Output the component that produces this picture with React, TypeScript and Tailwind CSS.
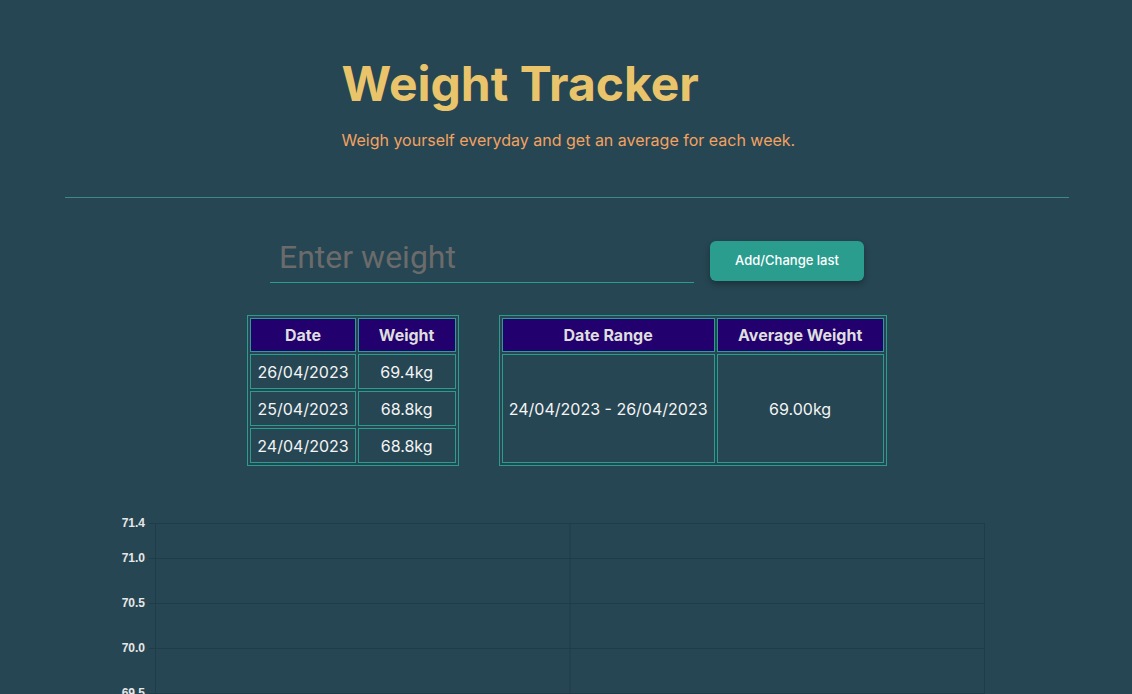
const days = [
  { date: "26/04/2023", weight: "69.4kg" },
  { date: "25/04/2023", weight: "68.8kg" },
  { date: "24/04/2023", weight: "68.8kg" },
];

const ticks = [
  { label: "71.4", y: 0 },
  { label: "71.0", y: 35 },
  { label: "70.5", y: 80 },
  { label: "70.0", y: 125 },
  { label: "69.5", y: 170 },
  { label: "69.0", y: 215 },
  { label: "68.5", y: 260 },
];

function Chart() {
  const left = 90;
  const right = 919;
  const mid = (left + right) / 2;
  return (
    <svg width="1004" height="300" className="block overflow-visible">
      {ticks.map((t) => (
        <g key={t.label}>
          <line x1={left - 6} x2={right} y1={t.y + 0.5} y2={t.y + 0.5} stroke="#1f3d49" strokeWidth="1" />
          <text
            x={left - 10}
            y={t.y + 4}
            textAnchor="end"
            fontFamily="Liberation Sans, Arial, sans-serif"
            fontWeight="bold"
            fontSize="12"
            fill="#e6e6e6"
          >
            {t.label}
          </text>
        </g>
      ))}
      {[left, mid, right].map((x) => (
        <line key={x} x1={x + 0.5} x2={x + 0.5} y1={0} y2={300} stroke="#1f3d49" strokeWidth="1" />
      ))}
    </svg>
  );
}

export default function App() {
  return (
    <div className="min-h-[694px] bg-[#264653] pb-10 pl-[2px] font-['Inter',sans-serif]">
      <header className="flex justify-center pt-[60px]">
        <div className="w-[451px] text-left">
          <h1 className="whitespace-nowrap text-[48px] font-bold leading-none text-[#e9c46a]">Weight Tracker</h1>
          <p className="mt-[20px] whitespace-nowrap text-base text-[#f4a261]">
            Weigh yourself everyday and get an average for each week.
          </p>
        </div>
      </header>

      <hr className="mx-auto mt-[45px] w-[1004px] border-0 border-t border-[#3f8884]" />

      <div className="mt-[40px] flex items-center justify-center gap-4">
        <input
          type="text"
          placeholder="Enter weight"
          className="h-[45px] w-[424px] border-0 border-b border-[#2a9d8f] bg-transparent px-[9px] pb-[6px] font-['Roboto',sans-serif] text-[32px] text-white outline-none placeholder:text-[#6b6b6b]"
        />
        <button
          type="button"
          className="h-10 w-[154px] rounded-md bg-[#2a9d8f] text-[13px] font-medium text-white shadow-[0_3px_6px_rgba(0,0,0,0.3)]"
        >
          Add/Change last
        </button>
      </div>

      <div className="mt-[32px] flex items-stretch justify-center gap-10">
        <table className="border-separate border-spacing-[2px] border border-[#2a9d8f] text-center text-base text-[#f4f4f4]">
          <thead>
            <tr>
              <th className="h-[34px] w-[105px] border border-[#2a9d8f] bg-[#22006e] font-bold text-[#dedede]">Date</th>
              <th className="h-[34px] w-[98px] border border-[#2a9d8f] bg-[#22006e] font-bold text-[#dedede]">Weight</th>
            </tr>
          </thead>
          <tbody>
            {days.map((d) => (
              <tr key={d.date}>
                <td className="h-[35px] border border-[#2a9d8f] px-[6px]">{d.date}</td>
                <td className="h-[35px] border border-[#2a9d8f]">{d.weight}</td>
              </tr>
            ))}
          </tbody>
        </table>

        <table className="border-separate border-spacing-[2px] border border-[#2a9d8f] text-center text-base text-[#f4f4f4]">
          <thead>
            <tr>
              <th className="h-[34px] w-[213px] border border-[#2a9d8f] bg-[#22006e] font-bold text-[#dedede]">Date Range</th>
              <th className="h-[34px] w-[167px] border border-[#2a9d8f] bg-[#22006e] font-bold text-[#dedede]">Average Weight</th>
            </tr>
          </thead>
          <tbody>
            <tr>
              <td className="h-[109px] border border-[#2a9d8f] px-[6px]">24/04/2023 - 26/04/2023</td>
              <td className="h-[109px] border border-[#2a9d8f]">69.00kg</td>
            </tr>
          </tbody>
        </table>
      </div>

      <div className="mt-[57px] flex justify-center">
        <Chart />
      </div>
    </div>
  );
}
